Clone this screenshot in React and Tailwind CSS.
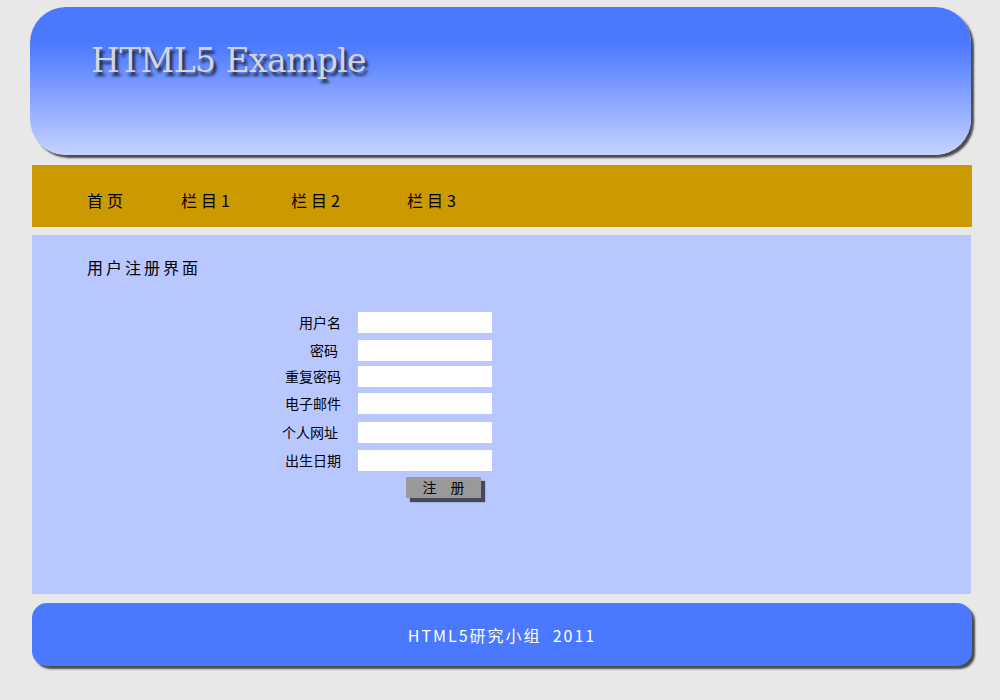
import React from 'react';

const fields = [
  { label: '用户名', mt: 'mt-0', pr: 'pr-0' },
  { label: '密码', mt: 'mt-[7px]', pr: 'pr-[3px]' },
  { label: '重复密码', mt: 'mt-[5px]', pr: 'pr-0' },
  { label: '电子邮件', mt: 'mt-[6px]', pr: 'pr-0' },
  { label: '个人网址', mt: 'mt-[8px]', pr: 'pr-[3px]' },
  { label: '出生日期', mt: 'mt-[7px]', pr: 'pr-0' },
];

const navItems = [
  { text: '首页', w: 'w-[94px]' },
  { text: '栏目1', w: 'w-[110px]' },
  { text: '栏目2', w: 'w-[116px]' },
  { text: '栏目3', w: 'w-[80px]' },
];

export default function App() {
  return (
    <div className="min-h-[700px] bg-[#e8e8e8] pt-[7px] font-['Noto_Sans_CJK_SC',sans-serif]">
      {/* header */}
      <header className="ml-[30px] h-[148px] w-[941px] rounded-[36px] bg-[linear-gradient(to_bottom,#4a78ff_0%,#4a78ff_24%,#c6d2ff_100%)] shadow-[3px_3px_2px_#4b4b4b] pl-[61px] pt-[34px]">
        <h1 className="font-['DejaVu_Serif',serif] text-[33px] leading-[40px] tracking-[-0.6px] text-[#d4d4dc] [text-shadow:3px_4px_3px_#1e2440]">
          HTML5 Example
        </h1>
      </header>

      {/* nav */}
      <nav className="ml-[32px] mt-[10px] flex h-[62px] w-[940px] items-center bg-[#cc9900] pl-[55px] pt-[8px]">
        {navItems.map((item) => (
          <span
            key={item.text}
            className={`${item.w} text-[16px] leading-[20px] tracking-[4px] text-black`}
          >
            {item.text}
          </span>
        ))}
      </nav>

      {/* main */}
      <main className="ml-[32px] mt-[8px] h-[359px] w-[939px] bg-[#b8c8ff] pt-[21px]">
        <h2 className="pl-[55px] text-[16px] leading-[22px] tracking-[3px] text-black">用户注册界面</h2>
        <form className="mt-[34px] flex flex-col">
          {fields.map((f) => (
            <div key={f.label} className={`${f.mt} flex items-center`}>
              <label className={`w-[309px] text-right text-[14px] leading-[21px] text-black ${f.pr}`}>
                {f.label}
              </label>
              <input type="text" className="ml-[17px] h-[21px] w-[134px] bg-white outline-none" />
            </div>
          ))}
          <div className="mt-[3px] pl-[374px]">
            <button
              type="button"
              className="h-[21px] w-[75px] bg-[#999999] text-[14px] leading-[21px] tracking-[14px] pl-[14px] text-black shadow-[4px_4px_1px_#434a5c]"
            >
              注册
            </button>
          </div>
        </form>
      </main>

      {/* footer */}
      <footer className="ml-[32px] mt-[9px] flex h-[63px] w-[940px] items-center justify-center rounded-[15px] bg-[#4a78ff] shadow-[3px_3px_2px_#4b4b4b]">
        <span className="text-[16px] tracking-[2px] text-white">HTML5研究小组&nbsp;&nbsp;2011</span>
      </footer>
    </div>
  );
}
